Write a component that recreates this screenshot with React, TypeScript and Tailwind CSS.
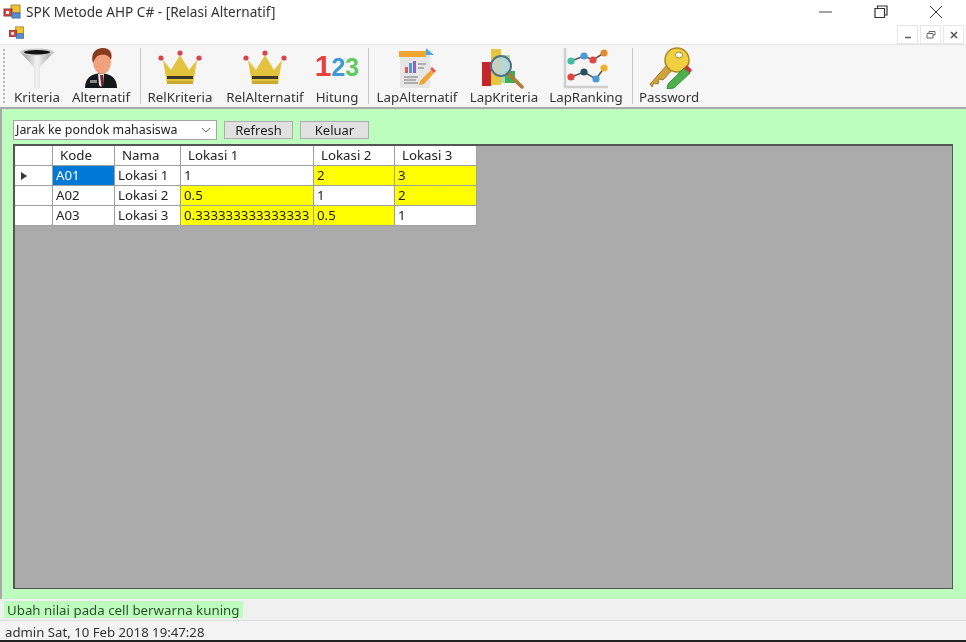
import { ReactNode } from "react";

const font = { fontFamily: '"Noto Sans", "Open Sans", sans-serif' };

function AppIcon({ className }: { className?: string }) {
  return (
    <svg viewBox="0 0 18 16" className={className}>
      <rect x="8" y="1" width="9" height="8" fill="#f2c230" stroke="#a88a2a" />
      <rect x="1" y="5" width="8" height="7" fill="#d8473f" stroke="#8a3a36" />
      <rect x="9" y="9" width="8" height="5" fill="#4f8fdc" stroke="#4a6f9f" />
      <rect x="3" y="7" width="3" height="3" fill="#fff" />
    </svg>
  );
}

function Funnel() {
  return (
    <svg viewBox="0 0 40 42" className="w-10 h-[42px]">
      <defs>
        <linearGradient id="fg" x1="0" x2="1">
          <stop offset="0" stopColor="#8c8c8c" />
          <stop offset="0.5" stopColor="#f4f4f4" />
          <stop offset="1" stopColor="#9a9a9a" />
        </linearGradient>
      </defs>
      <path d="M3 5 L37 5 L23 20 L23 41 L17 41 L17 20 Z" fill="url(#fg)" />
      <ellipse cx="20" cy="5" rx="17" ry="3.5" fill="#c9c9c9" />
      <ellipse cx="20" cy="5.2" rx="13" ry="2.2" fill="#111" />
    </svg>
  );
}

function Person() {
  return (
    <svg viewBox="0 0 36 42" className="w-9 h-[42px]">
      <path d="M2 41 C2 30 9 27 18 26 C27 27 34 30 34 41 Z" fill="#15181a" />
      <path d="M15 27 L21 27 L20 38 L18 40 L16 38 Z" fill="#e8e8e8" />
      <path d="M17 28 L20 28 L20.5 38 L18.5 40 Z" fill="#7a2428" />
      <ellipse cx="19" cy="15" rx="9" ry="12" fill="#f0a27c" />
      <path d="M10 16 C7 5 14 1 20 1 C27 1 30 6 28 13 C26 8 22 7 17 8 C13 9 12 12 10 16 Z" fill="#8a3d1e" />
      <rect x="7" y="33" width="7" height="3" fill="#888" />
    </svg>
  );
}

function Crown() {
  return (
    <svg viewBox="0 0 46 36" className="w-[46px] h-9 mb-[3px]">
      <path d="M6 10 L14 20 L23 5 L32 20 L40 10 L36 34 L10 34 Z" fill="#e3c23e" />
      <rect x="10" y="26" width="26" height="3" fill="#3d3a2a" />
      <rect x="10" y="31" width="26" height="3" fill="#c9a92e" />
      <circle cx="4" cy="8" r="2.6" fill="#d9434a" />
      <circle cx="23" cy="3" r="2.6" fill="#d9434a" />
      <circle cx="42" cy="8" r="2.6" fill="#d9434a" />
    </svg>
  );
}

function Numbers() {
  return (
    <span className="flex items-baseline leading-none font-bold mb-[8px]" style={{ fontFamily: '"Liberation Sans", sans-serif' }}>
      <span className="text-[30px] text-[#e8413c]">1</span>
      <span className="text-[25px] text-[#3c9ad8]">2</span>
      <span className="text-[25px] text-[#5ccc5c]">3</span>
    </span>
  );
}

function ReportIcon() {
  return (
    <svg viewBox="0 0 38 42" className="w-[38px] h-[42px]">
      <rect x="2" y="7" width="30" height="34" rx="1" fill="#e6e6e6" />
      <rect x="1" y="4" width="27" height="6" fill="#f0a431" />
      <path d="M28 1 L36 8 L28 8 Z" fill="#47a7e0" />
      <rect x="7" y="20" width="3" height="6" fill="#e0574f" />
      <rect x="11" y="16" width="3" height="10" fill="#4b9ad8" />
      <rect x="15" y="14" width="3" height="12" fill="#8a66c4" />
      <path d="M20 17 H28 M20 21 H26 M6 30 H20 M6 33 H18 M6 36 H20" stroke="#777" strokeWidth="1" />
      <path d="M22 34 L33 23 L36 26 L26 37 L21 38 Z" fill="#f0a431" />
      <path d="M32 22 L34 20 L38 24 L36 26 Z" fill="#e0574f" />
    </svg>
  );
}

function SearchChart() {
  return (
    <svg viewBox="0 0 46 42" className="w-[46px] h-[42px]">
      <rect x="1" y="15" width="9" height="24" fill="#c4262b" />
      <rect x="10" y="2" width="10" height="36" fill="#e6c63f" />
      <rect x="20" y="8" width="9" height="28" fill="#a8dfa8" />
      <rect x="24" y="24" width="10" height="12" fill="#3fae5a" />
      <path d="M27 26 L41 40" stroke="#b07a30" strokeWidth="3.5" strokeLinecap="round" />
      <circle cx="20" cy="19" r="10" fill="#b9d6e8" fillOpacity="0.75" stroke="#54708a" strokeWidth="2" />
    </svg>
  );
}

function RankChart() {
  return (
    <svg viewBox="0 0 46 42" className="w-[46px] h-[42px]">
      <path d="M2 1 V40 H45" stroke="#cfcfcf" strokeWidth="2.5" fill="none" />
      <path d="M8 14 L21 9 L30 13 L41 6" stroke="#555" strokeWidth="1.5" fill="none" />
      <path d="M8 30 L21 25 L33 32 L41 21" stroke="#555" strokeWidth="1.5" fill="none" />
      <circle cx="8" cy="14" r="3.6" fill="#3fbf9f" />
      <circle cx="21" cy="9" r="3.6" fill="#4b9ad8" />
      <circle cx="30" cy="13" r="3.6" fill="#e0483f" />
      <circle cx="41" cy="6" r="3.6" fill="#e58a2c" />
      <circle cx="8" cy="30" r="3.6" fill="#e0483f" />
      <circle cx="21" cy="25" r="3.6" fill="#26505f" />
      <circle cx="33" cy="32" r="3.6" fill="#4b9ad8" />
      <circle cx="41" cy="21" r="3.6" fill="#efb02f" />
    </svg>
  );
}

function KeyIcon() {
  return (
    <svg viewBox="0 0 46 42" className="w-[46px] h-[42px]">
      <path d="M4 37 L21 18 L26 23 L17 33 L13 32 L12 37 L8 36 L6 40 Z" fill="#d2a33a" stroke="#8a6a22" strokeWidth="0.8" />
      <circle cx="31" cy="13" r="12" fill="#f0d040" stroke="#a98a22" strokeWidth="1.5" />
      <ellipse cx="33" cy="8" rx="3.6" ry="3" fill="#fff" stroke="#a98a22" />
      <path d="M22 37 L38 21 L44 26 L28 41 L21 42 Z" fill="#4cb04c" stroke="#2e7a34" strokeWidth="0.8" />
      <path d="M38 21 L41 18 L46 23 L44 26 Z" fill="#c9353a" />
    </svg>
  );
}

function Tool({ label, width, children }: { label: string; width: string; children: ReactNode }) {
  return (
    <div className={`flex flex-col items-center shrink-0 ${width}`}>
      <div className="h-[43px] flex items-end justify-center">{children}</div>
      <span className="text-[13.3px] leading-[17px] text-[#333] whitespace-nowrap">{label}</span>
    </div>
  );
}

function Separator() {
  return <div className="w-px h-[56px] bg-[#c8c8c8] shrink-0 self-center" />;
}

const columns = "grid grid-cols-[38px_62px_66px_133px_81px_82px] w-[462px]";
const cellBase = "h-5 border-r border-b border-[#a0a0a0] px-[3px] text-[13.3px] leading-[19px] whitespace-nowrap overflow-hidden text-[#222]";

type Row = { code: string; name: string; values: [string, boolean][]; active?: boolean };

const rows: Row[] = [
  { code: "A01", name: "Lokasi 1", active: true, values: [["1", false], ["2", true], ["3", true]] },
  { code: "A02", name: "Lokasi 2", values: [["0.5", true], ["1", false], ["2", true]] },
  { code: "A03", name: "Lokasi 3", values: [["0.333333333333333", true], ["0.5", true], ["1", false]] },
];

function HeaderCell({ children }: { children?: ReactNode }) {
  return (
    <div className="h-5 bg-white border-r border-b border-[#a0a0a0] pl-[7px] text-[13.3px] leading-[19px] text-[#222]">
      {children}
    </div>
  );
}

export default function App() {
  return (
    <div className="w-[966px] h-[642px] flex flex-col bg-white overflow-hidden blur-[0.4px]" style={font}>
      {/* title bar */}
      <div className="h-[22px] flex items-center pl-[3px] pt-[2px] shrink-0">
        <AppIcon className="w-[18px] h-4" />
        <span className="ml-[5px] text-[13.6px] text-[#333]">SPK Metode AHP C# - [Relasi Alternatif]</span>
        <div className="ml-auto flex items-center">
          <svg viewBox="0 0 14 14" className="w-3.5 h-3.5 mr-[41px]"><path d="M0 7 H13" stroke="#444" strokeWidth="1" /></svg>
          <svg viewBox="0 0 14 14" className="w-3.5 h-3.5 mr-[41px]"><path d="M3.5 3.5 V1 H13 V10 H10.5 M1 3.5 H10.5 V12.5 H1 Z" stroke="#333" strokeWidth="1.2" fill="none" /></svg>
          <svg viewBox="0 0 14 14" className="w-3.5 h-3.5 mr-[23px]"><path d="M1 1 L13 13 M13 1 L1 13" stroke="#333" strokeWidth="1" /></svg>
        </div>
      </div>

      {/* mdi strip */}
      <div className="h-[22px] flex items-start pl-[8px] shrink-0">
        <AppIcon className="w-[17px] h-[14px] mt-[4px]" />
        <div className="ml-auto flex gap-[2px] mt-[3px] mr-[2px]">
          <div className="w-[21px] h-[19px] border border-[#e6e6e6] flex items-center justify-center">
            <svg viewBox="0 0 8 8" className="w-2 h-2"><path d="M1 6.5 H7" stroke="#666" strokeWidth="1.6" /></svg>
          </div>
          <div className="w-[21px] h-[19px] border border-[#e6e6e6] flex items-center justify-center">
            <svg viewBox="0 0 10 8" className="w-2.5 h-2"><path d="M3 2 V0.5 H9 V4 H7 M1 2.5 H7 V7 H1 Z" stroke="#667" strokeWidth="1" fill="none" /></svg>
          </div>
          <div className="w-[21px] h-[19px] border border-[#e6e6e6] flex items-center justify-center">
            <svg viewBox="0 0 8 8" className="w-2 h-2"><path d="M1 1 L7 7 M7 1 L1 7" stroke="#556" strokeWidth="1.6" /></svg>
          </div>
        </div>
      </div>

      {/* toolbar */}
      <div className="h-[65px] shrink-0 flex items-center bg-[#f6f6f6] border-t border-[#e2e2e2] border-b-2 border-b-[#a9a9a9] rounded-tr-[3px] pl-[2px]">
        <div className="w-[3px] h-[54px] ml-[1px] border-l-2 border-dotted border-[#b5b5b5] shrink-0" />
        <Tool label="Kriteria" width="w-[62px]"><Funnel /></Tool>
        <Tool label="Alternatif" width="w-[66px]"><Person /></Tool>
        <div className="w-[6px]" />
        <Separator />
        <Tool label="RelKriteria" width="w-[78px]"><Crown /></Tool>
        <Tool label="RelAlternatif" width="w-[92px]"><Crown /></Tool>
        <Tool label="Hitung" width="w-[52px]"><Numbers /></Tool>
        <div className="w-[5px]" />
        <Separator />
        <Tool label="LapAlternatif" width="w-[96px]"><ReportIcon /></Tool>
        <Tool label="LapKriteria" width="w-[78px]"><SearchChart /></Tool>
        <Tool label="LapRanking" width="w-[86px]"><RankChart /></Tool>
        <div className="w-[3px]" />
        <Separator />
        <Tool label="Password" width="w-[72px]"><KeyIcon /></Tool>
      </div>

      {/* form body */}
      <div className="flex-1 flex flex-col bg-[#bdfdbd] border-l-2 border-[#a9a9a9] pl-[11px] pr-[11px]">
        <div className="flex items-start mt-[11px] h-[24px] shrink-0">
          <div className="w-[204px] h-[20px] bg-white border border-[#a5a5a5] flex items-center pl-[2px] pr-[5px] text-[12.4px] text-[#222] whitespace-nowrap">
            <span>Jarak ke pondok mahasiswa</span>
            <svg viewBox="0 0 10 6" className="w-2.5 h-1.5 ml-auto"><path d="M1 1 L5 5 L9 1" stroke="#666" fill="none" /></svg>
          </div>
          <button className="ml-[7px] mt-[1px] w-[69px] h-[18px] bg-[#e1e1e1] border border-[#adadad] text-[13px] leading-[16px] text-[#222]">Refresh</button>
          <button className="ml-[7px] mt-[1px] w-[69px] h-[18px] bg-[#e1e1e1] border border-[#adadad] text-[13px] leading-[16px] text-[#222]">Keluar</button>
        </div>

        {/* grid */}
        <div className="w-[940px] h-[445px] bg-[#ababab] border-2 border-[#555] border-r border-b shrink-0">
          <div className={columns}>
            <HeaderCell />
            <HeaderCell>Kode</HeaderCell>
            <HeaderCell>Nama</HeaderCell>
            <HeaderCell>Lokasi 1</HeaderCell>
            <HeaderCell>Lokasi 2</HeaderCell>
            <HeaderCell>Lokasi 3</HeaderCell>
            {rows.map((row) => (
              <div key={row.code} className="contents">
                <div className="h-5 bg-white border-r border-b border-[#a0a0a0] flex items-center pl-[6px]">
                  {row.active && <svg viewBox="0 0 6 8" className="w-1.5 h-2"><path d="M0 0 L6 4 L0 8 Z" fill="#333" /></svg>}
                </div>
                <div className={`${cellBase} ${row.active ? "bg-[#0078d7] !text-white" : "bg-white"}`}>{row.code}</div>
                <div className={`${cellBase} bg-white`}>{row.name}</div>
                {row.values.map(([value, editable], i) => (
                  <div key={i} className={`${cellBase} ${editable ? "bg-[#ffff00]" : "bg-white"}`}>{value}</div>
                ))}
              </div>
            ))}
          </div>
        </div>
      </div>

      {/* hint strip */}
      <div className="h-[21px] shrink-0 bg-[#f0f0f0] flex items-center pl-[4px]">
        <span className="w-[239px] h-[17px] bg-[#bdfdbd] pl-[3px] text-[13.3px] leading-[18px] text-[#2f4f2f] whitespace-nowrap">Ubah nilai pada cell berwarna kuning</span>
      </div>

      {/* status strip */}
      <div className="h-[20px] shrink-0 bg-[#f3f3f3] border-t border-[#dcdcdc] pl-[5px] text-[13.2px] leading-[22px] text-[#333] whitespace-nowrap">
        admin Sat, 10 Feb 2018 19:47:28
      </div>
      <div className="h-[2px] shrink-0 bg-[#222]" />
    </div>
  );
}
